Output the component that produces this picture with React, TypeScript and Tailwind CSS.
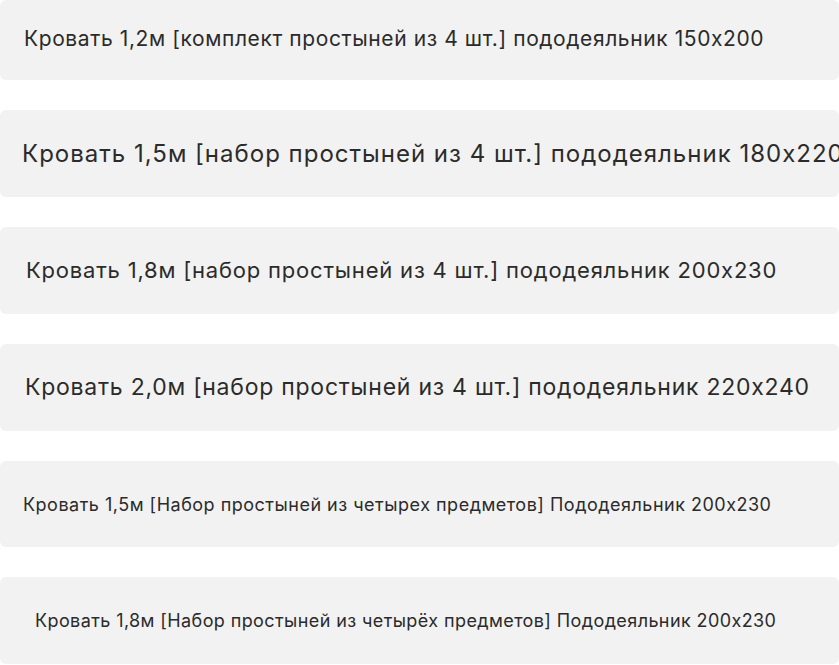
import React from "react";

const rows = [
  { text: "Кровать 1,2м [комплект простыней из 4 шт.] пододеяльник 150x200", cls: "h-[80px] pl-[24px] pb-[3px] text-[21px] tracking-[0.6px]" },
  { text: "Кровать 1,5м [набор простыней из 4 шт.] пододеяльник 180x220", cls: "h-[87px] pl-[22px] text-[24px] tracking-[1px]" },
  { text: "Кровать 1,8м [набор простыней из 4 шт.] пододеяльник 200x230", cls: "h-[87px] pl-[26px] text-[22px] tracking-[0.8px]" },
  { text: "Кровать 2,0м [набор простыней из 4 шт.] пододеяльник 220x240", cls: "h-[87px] pl-[25px] text-[23px] tracking-[0.75px]" },
  { text: "Кровать 1,5м [Набор простыней из четырех предметов] Пододеяльник 200x230", cls: "h-[86px] pl-[23px] text-[18px] tracking-[0.5px]" },
  { text: "Кровать 1,8м [Набор простыней из четырёх предметов] Пододеяльник 200x230", cls: "h-[87px] pl-[35px] text-[18px] tracking-[0.4px]" },
];

export default function App() {
  return (
    <div
      className="w-[839px] h-[665px] overflow-hidden bg-white flex flex-col gap-[30px]"
      style={{ fontFamily: "Inter, 'Noto Sans', sans-serif" }}
    >
      {rows.map((r, i) => (
        <div
          key={i}
          className={`flex items-center whitespace-nowrap overflow-hidden rounded-[6px] bg-[#f2f2f2] text-[#2b2b2b] ${r.cls}`}
        >
          {r.text}
        </div>
      ))}
    </div>
  );
}
